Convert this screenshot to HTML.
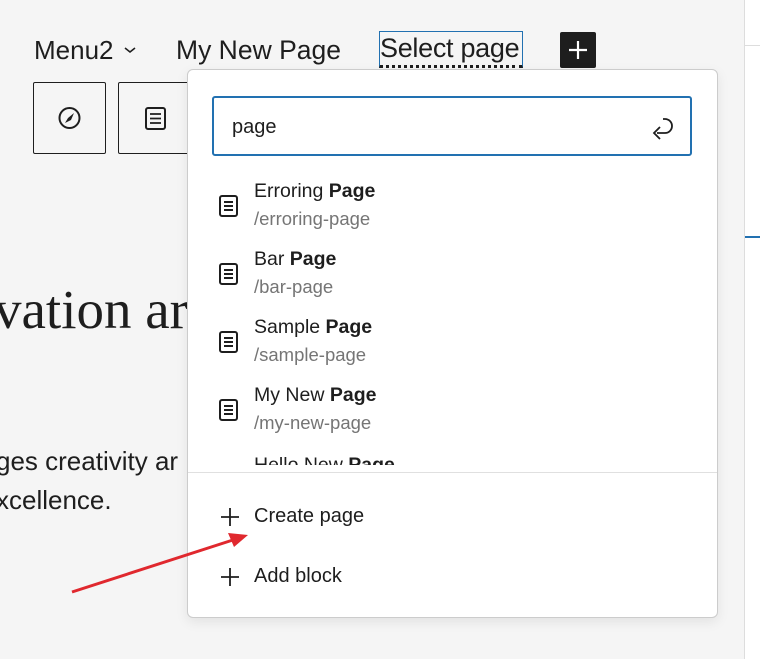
<!DOCTYPE html>
<html><head><style>
*{margin:0;padding:0;box-sizing:border-box}
body{width:760px;height:659px;background:#f5f5f5;font-family:"Liberation Sans",sans-serif;color:#1e1e1e;position:relative;overflow:hidden}
.a{position:absolute;white-space:nowrap}
.item .t{font-size:19.5px;color:#1e1e1e}
.item .s{font-size:18.5px;color:#757575;margin-top:5px}
</style></head><body>
<div class="a" style="left:744px;top:0;width:16px;height:659px;background:#fff;border-left:1px solid #ddd"></div>
<div class="a" style="left:745px;top:45px;width:15px;height:1px;background:#ddd"></div>
<div class="a" style="left:745px;top:236px;width:15px;height:2px;background:#2271b1"></div>

<div class="a" style="left:34px;top:35px;font-size:26px">Menu2</div>
<svg class="a" style="left:122px;top:45px" width="16" height="10"><path d="M3 3l5 4 5-4" fill="none" stroke="#1e1e1e" stroke-width="1.6"/></svg>
<div class="a" style="left:176px;top:35px;font-size:26.5px">My New Page</div>
<div class="a" style="left:379px;top:31px;width:144px;height:37px;border:1px solid #2271b1;border-bottom:3px dotted #1e1e1e"></div>
<div class="a" style="left:380px;top:33px;font-size:27px;letter-spacing:-0.3px">Select page</div>
<div class="a" style="left:560px;top:32px;width:36px;height:36px;background:#1e1e1e;border-radius:2px"><svg width="36" height="36"><path d="M18 9v18M9 18h18" stroke="#fff" stroke-width="2.2"/></svg></div>

<div class="a" style="left:33px;top:82px;width:73px;height:72px;border:1px solid #1e1e1e;border-radius:2px"><svg width="71" height="70"><circle cx="35.5" cy="35" r="10" fill="none" stroke="#1e1e1e" stroke-width="2"/><path d="M40 30l-3 7-3-2z M31 40l3-5 3 2z" fill="#1e1e1e"/></svg></div>
<div class="a" style="left:118px;top:82px;width:73px;height:72px;border:1px solid #1e1e1e;border-radius:2px"><svg width="71" height="70"><rect x="27" y="25" width="19" height="21" rx="2" fill="none" stroke="#1e1e1e" stroke-width="2"/><path d="M31 31h11M31 35.5h11M31 40h11" stroke="#1e1e1e" stroke-width="1.8"/></svg></div>

<div class="a" style="left:-6px;top:278px;font-size:55px;font-family:'Liberation Serif',serif">vation ar</div>
<div class="a" style="left:-4px;top:446px;font-size:26px">ges creativity ar</div>
<div class="a" style="left:-4px;top:485px;font-size:26px">xcellence.</div>

<div class="a" style="left:187px;top:69px;width:531px;height:549px;background:#fff;border:1px solid #ccc;border-radius:6px;box-shadow:0 4px 12px rgba(0,0,0,.08)">
 <div class="a" style="left:24px;top:26px;width:480px;height:60px;border:2px solid #2271b1;border-radius:3px">
  <div class="a" style="left:18px;top:18px;font-size:20px">page</div>
  <svg class="a" style="left:432px;top:14px" width="32" height="30"><path d="M11 21h8a7 7 0 0 0 0-14h-2 M14 15l-6 6 6 6" fill="none" stroke="#1e1e1e" stroke-width="1.8"/></svg>
 </div>
 <div class="a" style="left:0;top:104px;width:529px;height:291px;overflow:hidden">
  <div class="a item" style="left:66px;top:6px"><div class="t">Erroring <b>Page</b></div><div class="s">/erroring-page</div></div>
  <div class="a item" style="left:66px;top:74px"><div class="t">Bar <b>Page</b></div><div class="s">/bar-page</div></div>
  <div class="a item" style="left:66px;top:142px"><div class="t">Sample <b>Page</b></div><div class="s">/sample-page</div></div>
  <div class="a item" style="left:66px;top:210px"><div class="t">My New <b>Page</b></div><div class="s">/my-new-page</div></div>
  <div class="a item" style="left:66px;top:280px"><div class="t">Hello New <b>Page</b></div></div>
  <svg class="a" style="left:30px;top:20px" width="22" height="260">
   <g fill="none" stroke="#1e1e1e" stroke-width="2">
   <rect x="2" y="2" width="17" height="20" rx="2"/><path d="M6 8h9M6 12h9M6 16h9"/>
   <rect x="2" y="70" width="17" height="20" rx="2"/><path d="M6 76h9M6 80h9M6 84h9"/>
   <rect x="2" y="138" width="17" height="20" rx="2"/><path d="M6 144h9M6 148h9M6 152h9"/>
   <rect x="2" y="206" width="17" height="20" rx="2"/><path d="M6 212h9M6 216h9M6 220h9"/>
   </g></svg>
 </div>
 <div class="a" style="left:0;top:402px;width:529px;height:1px;background:#e0e0e0"></div>
 <svg class="a" style="left:32px;top:437px" width="20" height="20"><path d="M10 1v18M1 10h18" stroke="#1e1e1e" stroke-width="1.8"/></svg>
 <div class="a" style="left:66px;top:435px;font-size:20px">Create page</div>
 <svg class="a" style="left:32px;top:497px" width="20" height="20"><path d="M10 1v18M1 10h18" stroke="#1e1e1e" stroke-width="1.8"/></svg>
 <div class="a" style="left:66px;top:495px;font-size:20px">Add block</div>
</div>

<svg class="a" style="left:0;top:0" width="760" height="659"><path d="M72 592L236 539" stroke="#e0282e" stroke-width="3"/><path d="M248 535l-20-2 6 14z" fill="#e0282e"/></svg>
</body></html>
